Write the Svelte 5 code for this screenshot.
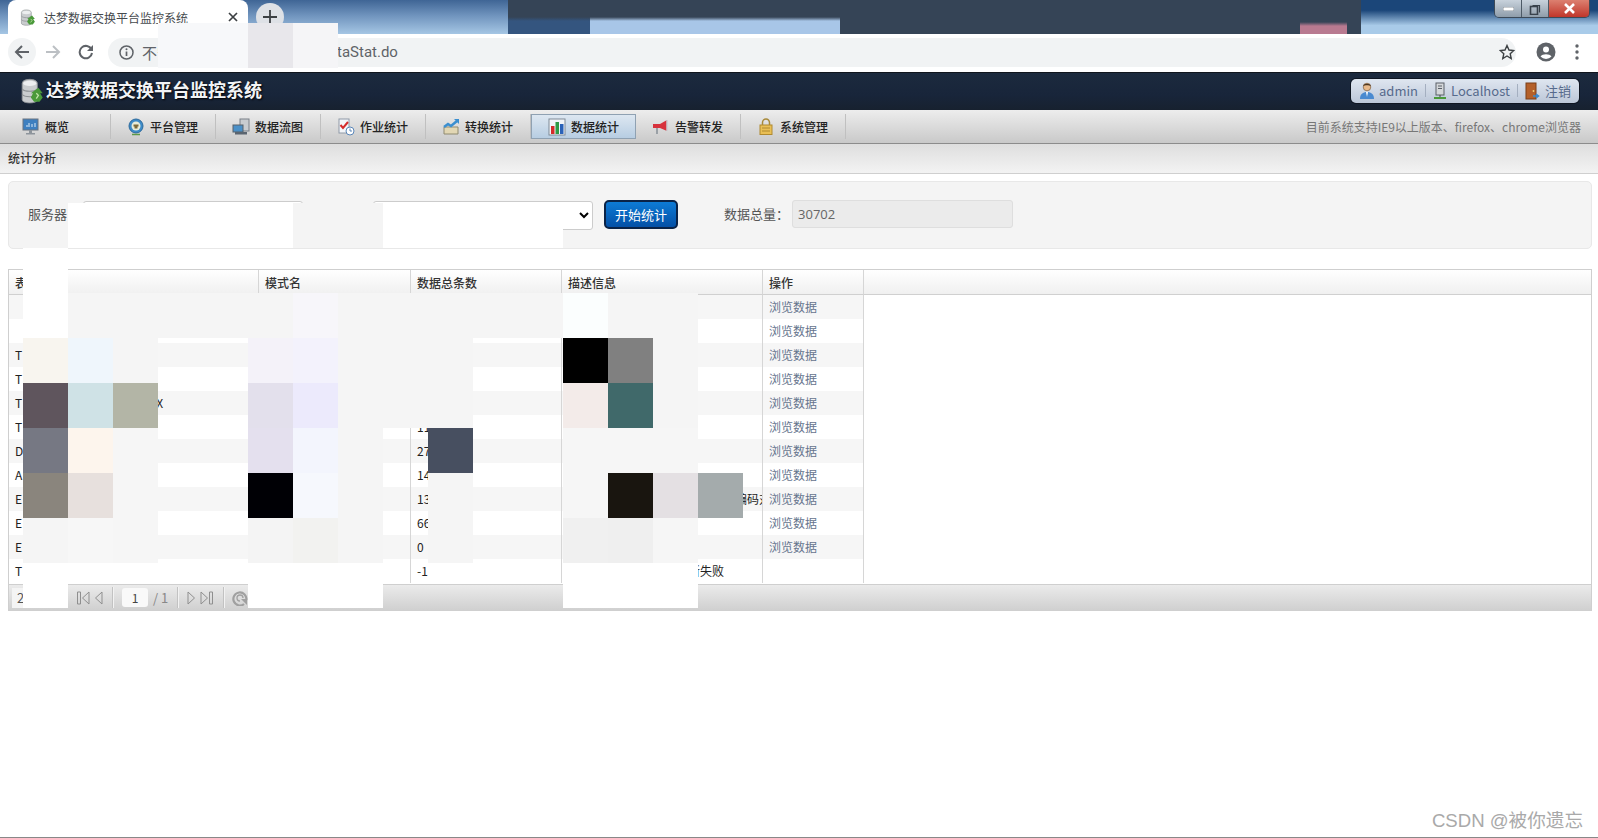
<script lang="ts">
	const navItems = [
		{ id: 'overview', label: '概览' },
		{ id: 'platform', label: '平台管理' },
		{ id: 'flow', label: '数据流图' },
		{ id: 'job', label: '作业统计' },
		{ id: 'transform', label: '转换统计' },
		{ id: 'stats', label: '数据统计', active: true },
		{ id: 'alarm', label: '告警转发' },
		{ id: 'system', label: '系统管理' }
	];

	const rows = [
		{ name: '', count: '', link: true },
		{ name: '', count: '', link: true },
		{ name: 'T', count: '', link: true },
		{ name: 'T', count: '', link: true },
		{ name: 'T', tail: 'X', count: '', link: true },
		{ name: 'T', count: '11', link: true },
		{ name: 'D', count: '27', link: true },
		{ name: 'A', count: '14', link: true },
		{ name: 'E', count: '13', desc: '编码对', link: true },
		{ name: 'E', count: '66', link: true },
		{ name: 'E', count: '0', link: true },
		{ name: 'T', count: '-1', fail: '新失败', link: false }
	];

	// mosaic over the redacted parts: [column, row, colour] on a 45px grid
	const g = '#f5f5f5';
	const w = '#ffffff';
	const tiles: [number, number, string][] = [
		[3, 0, '#f7f8fa'], [4, 0, '#f7f8fa'], [5, 0, '#e8e7eb'], [6, 0, '#f5f5f7'],
		[1, 4, w], [2, 4, w], [3, 4, w], [4, 4, w], [5, 4, w], [6, 4, '#f4f4f4'], [7, 4, '#f4f4f4'],
		[8, 4, w], [9, 4, w], [10, 4, w], [11, 4, w],
		[0, 5, w], [0, 6, w],
		[1, 6, g], [2, 6, g], [3, 6, g], [4, 6, g], [5, 6, g], [6, 6, '#f7f6fa'], [7, 6, g], [8, 6, g], [9, 6, g],
		[10, 6, g], [11, 6, g], [12, 6, '#fbfefe'], [13, 6, g], [14, 6, g],
		[0, 7, '#f8f5ef'], [1, 7, '#eff6fc'], [2, 7, g], [5, 7, '#f4f2f9'], [6, 7, '#f3f2fc'], [7, 7, g], [8, 7, g], [9, 7, g],
		[12, 7, '#000000'], [13, 7, '#808080'], [14, 7, g],
		[0, 8, '#5f555d'], [1, 8, '#cfe2e6'], [2, 8, '#b3b5a6'], [5, 8, '#e3e0ec'], [6, 8, '#eceafc'], [7, 8, g], [8, 8, g], [9, 8, g],
		[12, 8, '#f3ebe9'], [13, 8, '#40696a'], [14, 8, g],
		[0, 9, '#767883'], [1, 9, '#fdf5ed'], [2, 9, '#f6f6f6'], [5, 9, '#e4e0ee'], [6, 9, '#f3f5fd'], [7, 9, g], [9, 9, '#474f60'],
		[12, 9, '#f6f6f6'], [13, 9, '#f6f6f6'], [14, 9, '#f6f6f6'],
		[0, 10, '#8a857d'], [1, 10, '#e7e0dd'], [2, 10, '#f6f6f6'], [5, 10, '#000005'], [6, 10, '#f6f8fd'], [7, 10, g], [9, 10, g],
		[12, 10, '#f6f6f6'], [13, 10, '#19150f'], [14, 10, '#e4e0e3'], [15, 10, '#a4abac'],
		[0, 11, g], [1, 11, '#f7f7f7'], [2, 11, '#f6f6f6'], [5, 11, '#f4f4f4'], [6, 11, '#f2f2f0'], [7, 11, g], [9, 11, g],
		[12, 11, '#f0f0f0'], [13, 11, '#efefef'], [14, 11, '#f6f6f6'],
		[0, 12, w], [5, 12, w], [6, 12, w], [7, 12, w], [12, 12, w], [13, 12, w], [14, 12, w]
	];
</script>

{#snippet dbIcon(size)}
	<svg width={size} height={size} viewBox="0 0 24 24">
		<path d="M2 5c0-5 14-5 14 0v15c0 4-14 4-14 0z" fill="#c9ccce" stroke="#8b8f92" stroke-width=".8" />
		<path d="M2 10c2 3 12 3 14 0M2 15c2 3 12 3 14 0" fill="none" stroke="#8b8f92" />
		<ellipse cx="9" cy="5" rx="6" ry="2.4" fill="#eceeef" />
		<path d="M17 9l4 5h-2.400l2.400 4-3 4h-5l-3-4 2-4h-2z" fill="#4a9a3a" />
		<path d="M15 14l2 2-2 3" fill="none" stroke="#bfe3a8" stroke-width="1.200" />
	</svg>
{/snippet}

{#snippet navIcon(id)}
	<svg width="18" height="18" viewBox="0 0 18 18">
		{#if id === 'overview'}
			<rect x="1" y="1" width="15" height="11" fill="#3d7fc0" stroke="#6b7480" />
			<path d="M4 8h2M7 5v4M10 6v3M13 5v4" stroke="#dcecf8" />
			<rect x="7" y="12" width="3" height="3" fill="#8d949b" />
			<rect x="4" y="15" width="9" height="1.500" fill="#8d949b" />
		{:else if id === 'platform'}
			<circle cx="9" cy="8" r="7" fill="#3c8bc9" stroke="#2c6a9c" />
			<circle cx="9" cy="8" r="4.500" fill="#e8edd8" />
			<path d="M6.500 6.500h5v2h-1v2h-3v-2h-1z" fill="#7a6a3a" />
			<path d="M5 16.500h8" stroke="#5d9a4a" stroke-width="1.500" />
		{:else if id === 'flow'}
			<rect x="8" y="1" width="9" height="12" fill="#c8ccd0" stroke="#7a8088" />
			<rect x="1" y="7" width="10" height="7" fill="#4a90c8" stroke="#56606a" />
			<rect x="3" y="14" width="12" height="2.500" fill="#5b6570" />
		{:else if id === 'job'}
			<rect x="2" y="1" width="10" height="14" fill="#f3f5f8" stroke="#8f9aa8" />
			<path d="M3.500 7l2.500 3 5-6" fill="none" stroke="#d42b2b" stroke-width="2" />
			<circle cx="13" cy="13" r="4" fill="#fff" stroke="#5a86b8" />
			<path d="M13 10.500v2.500h2" fill="none" stroke="#5a86b8" />
		{:else if id === 'transform'}
			<path d="M2 9h14v7H2z" fill="#e2d7b4" stroke="#8f8a70" />
			<path d="M2 9l4-3 3 2 6-5" fill="none" stroke="#3b8fd0" stroke-width="2.500" />
			<path d="M12 1h5v5z" fill="#3b8fd0" />
		{:else if id === 'stats'}
			<rect x="1" y="1" width="16" height="16" fill="#f2f5f8" stroke="#7f8a96" />
			<rect x="3" y="8" width="3.500" height="8" fill="#d42a2a" />
			<rect x="7.500" y="4" width="3.500" height="12" fill="#2f9a45" />
			<rect x="12" y="6" width="3.500" height="10" fill="#2a62b8" />
		{:else if id === 'alarm'}
			<path d="M1 6h7l7-4v11l-7-3H1z" fill="#d7323c" />
			<path d="M15 2v11" stroke="#c9ccd0" stroke-width="1.500" />
			<path d="M4 10v6h2v-6" fill="#9aa0a6" />
		{:else if id === 'system'}
			<path d="M5.500 7V4.500a3.500 3.500 0 0 1 7 0V7" fill="none" stroke="#a88a3a" stroke-width="1.500" />
			<rect x="3" y="7" width="12" height="9.500" fill="#e9bf55" stroke="#b08a30" />
			<path d="M5 10h8M5 13h8" stroke="#b08a30" />
		{/if}
	</svg>
{/snippet}

<div class="page">
	<div class="tabstrip">
		<div class="tab">
			{@render dbIcon(17)}
			<span class="tab-title">达梦数据交换平台监控系统</span>
			<svg class="tab-close" width="10" height="10" viewBox="0 0 10 10">
				<path d="M1 1l8 8M9 1l-8 8" stroke="#3c4043" stroke-width="1.700" />
			</svg>
		</div>
		<div class="new-tab">
			<svg width="14" height="14" viewBox="0 0 14 14"><path d="M7 0v14M0 7h14" stroke="#3c4043" stroke-width="1.800" /></svg>
		</div>
		<div class="win-controls">
			<span class="win-btn">
				<svg width="11" height="4" viewBox="0 0 11 4"><rect width="11" height="4" fill="#fff" stroke="#4a5560" stroke-width=".6" /></svg>
			</span>
			<span class="win-btn">
				<svg width="12" height="12" viewBox="0 0 12 12">
					<path d="M3.500 2.500h7v7" fill="none" stroke="#39424c" stroke-width="1.200" />
					<rect x="1.500" y="3.500" width="7" height="8" fill="none" stroke="#39424c" stroke-width="1.600" />
				</svg>
			</span>
			<span class="win-btn close">
				<svg width="13" height="11" viewBox="0 0 13 11"><path d="M2 1l9 9M11 1l-9 9" stroke="#fff" stroke-width="2.600" /></svg>
			</span>
		</div>
	</div>

	<div class="toolbar">
		<span class="round-btn">
			<svg width="16" height="16" viewBox="0 0 16 16"><path d="M15 8H2M8 2L2 8l6 6" fill="none" stroke="#5f6368" stroke-width="2" /></svg>
		</span>
		<span class="plain-btn">
			<svg width="16" height="16" viewBox="0 0 16 16"><path d="M1 8h13M8 2l6 6-6 6" fill="none" stroke="#bcc0c4" stroke-width="2" /></svg>
		</span>
		<span class="plain-btn">
			<svg width="16" height="16" viewBox="0 0 16 16"><path d="M13.500 5.500A6.200 6.200 0 1 0 14 9" fill="none" stroke="#5f6368" stroke-width="2" /><path d="M15 1v6H9z" fill="#5f6368" /></svg>
		</span>
		<div class="omnibox">
			<svg width="15" height="15" viewBox="0 0 15 15">
				<circle cx="7.500" cy="7.500" r="6.500" fill="none" stroke="#5f6368" stroke-width="1.500" />
				<path d="M7.500 6.500v4.500" stroke="#5f6368" stroke-width="1.700" />
				<circle cx="7.500" cy="4.300" r="1" fill="#5f6368" />
			</svg>
			<span class="url-state">不安</span>
			<span class="url-rest">taStat.do</span>
			<svg class="star" width="16" height="16" viewBox="0 0 16 16">
				<path d="M8 1.500l2 4.500 4.800.5-3.600 3.200 1 4.800L8 12l-4.200 2.500 1-4.800L1.200 6.500 6 6z" fill="none" stroke="#3c4043" stroke-width="1.400" />
			</svg>
		</div>
		<svg class="avatar" width="20" height="20" viewBox="0 0 20 20">
			<circle cx="10" cy="10" r="9.500" fill="#5f6368" />
			<circle cx="10" cy="7.500" r="3" fill="#fff" />
			<path d="M4.500 14.500c2-3 9-3 11 0a7.500 7.500 0 0 1-11 0z" fill="#fff" />
		</svg>
		<svg class="dots" width="4" height="16" viewBox="0 0 4 16">
			<circle cx="2" cy="2" r="1.700" fill="#5f6368" /><circle cx="2" cy="8" r="1.700" fill="#5f6368" /><circle cx="2" cy="14" r="1.700" fill="#5f6368" />
		</svg>
	</div>

	<header class="topbar">
		<span class="brand-icon">{@render dbIcon(26)}</span>
		<span class="brand">达梦数据交换平台监控系统</span>
		<div class="userbox">
			<span class="user-item">
				<svg width="16" height="18" viewBox="0 0 16 18">
					<circle cx="8" cy="5" r="3.800" fill="#e8b98a" stroke="#6a4a2a" stroke-width=".6" />
					<path d="M4 4c1-3 7-3 8 0-2-1-6-1-8 0z" fill="#4a3520" />
					<path d="M1 17c0-5 3-7 7-7s7 2 7 7z" fill="#4a8ad0" />
					<path d="M7 10h2l-1 5z" fill="#fff" />
				</svg>
				admin
			</span>
			<i></i>
			<span class="user-item">
				<svg width="14" height="18" viewBox="0 0 14 18">
					<rect x="3" y="1" width="8" height="12" fill="#d4d7da" stroke="#5a6068" />
					<path d="M5 4h4M5 6.500h4" stroke="#5a6068" />
					<path d="M7 13v2" stroke="#444" />
					<path d="M1 16h12" stroke="#4a9a3a" stroke-width="2" />
				</svg>
				Localhost
			</span>
			<i></i>
			<span class="user-item">
				<svg width="16" height="18" viewBox="0 0 16 18">
					<rect x="1" y="1" width="10" height="16" fill="#b4602a" stroke="#7a3f18" />
					<circle cx="8.500" cy="9" r=".9" fill="#f2d27a" />
					<path d="M8 14h5M11 12l2.500 2-2.500 2" fill="none" stroke="#3a8ad0" stroke-width="1.600" />
				</svg>
				注销
			</span>
		</div>
	</header>

	<nav class="nav">
		{#each navItems as item}
			<a class="nav-item" class:active={item.active} href="#top">
				{@render navIcon(item.id)}
				<span>{item.label}</span>
			</a>
		{/each}
		<span class="nav-note">目前系统支持IE9以上版本、firefox、chrome浏览器</span>
	</nav>

	<div class="crumb">统计分析</div>

	<section class="filter">
		<label class="server-label" for="server">服务器</label>
		<select id="server" class="server-select"></select>
		<select class="schema-select" aria-label="模式"></select>
		<button class="start-btn">开始统计</button>
		<span class="total-label">数据总量：</span>
		<input class="total-input" value="30702" disabled />
	</section>

	<section class="grid">
		<table>
			<thead>
				<tr>
					<th class="c-name">表名</th>
					<th class="c-schema">模式名</th>
					<th class="c-count">数据总条数</th>
					<th class="c-desc">描述信息</th>
					<th class="c-op">操作</th>
					<th class="c-fill"></th>
				</tr>
			</thead>
			<tbody>
				{#each rows as row}
					<tr>
						<td>{row.name}{#if row.tail}<span class="name-tail">{row.tail}</span>{/if}</td>
						<td></td>
						<td>{row.count}</td>
						<td>
							{#if row.desc}<span class="desc-tail">{row.desc}</span>{/if}
							{#if row.fail}<span class="fail-tail">{row.fail}</span>{/if}
						</td>
						<td>{#if row.link}<a class="browse" href="#top">浏览数据</a>{/if}</td>
						<td class="c-fill"></td>
					</tr>
				{/each}
			</tbody>
		</table>
		<div class="pager">
			<span class="page-size">2</span>
			<span class="pager-group first">
				<svg width="27" height="14" viewBox="0 0 27 14">
					<path d="M1.500 1v12h3V1zM13 1L6.500 7l6.500 6zM26 1l-6.500 6 6.500 6z" fill="none" stroke="#8f8f8f" />
				</svg>
			</span>
			<i></i>
			<span class="page-input">1</span>
			<span class="page-total">/ 1</span>
			<i></i>
			<span class="pager-group">
				<svg width="27" height="14" viewBox="0 0 27 14">
					<path d="M1 1l6.500 6L1 13zM14 1l6.500 6L14 13zM22.500 1v12h3V1z" fill="none" stroke="#8f8f8f" />
				</svg>
			</span>
			<i></i>
			<svg class="refresh" width="16" height="16" viewBox="0 0 16 16">
				<path d="M12 14a6.500 6.500 0 1 1 2.300-4" fill="none" stroke="#a0a0a0" stroke-width="2.200" />
				<path d="M8 11a3 3 0 1 1 3-3" fill="none" stroke="#a0a0a0" stroke-width="1.300" />
				<path d="M9 9h6v6z" fill="#a0a0a0" />
			</svg>
		</div>
	</section>

	{#each tiles as [c, r, colour]}
		<div class="tile" style="left:{23 + c * 45}px;top:{23 + r * 45}px;background:{colour}"></div>
	{/each}

	<div class="watermark">CSDN @被你遗忘</div>
</div>

<style>
	:global(body) {
		margin: 0;
		background: #fff;
	}

	.page {
		position: relative;
		height: 837px;
		overflow: hidden;
		border-bottom: 1px solid #888;
		font-family: 'Noto Sans CJK SC', 'Liberation Sans', sans-serif;
		font-size: 12px;
		color: #333;
	}

	.tabstrip {
		position: relative;
		height: 34px;
		display: flex;
		align-items: flex-start;
		background:
			linear-gradient(transparent, #a8c6e8 4px) 590px 17px / 250px 17px no-repeat,
			linear-gradient(transparent, #34557f 4px) 508px 17px / 82px 17px no-repeat,
			linear-gradient(transparent, #b87a90 4px) 1300px 22px / 47px 12px no-repeat,
			linear-gradient(#1b4679 0, #1b4679 30%, #a9cbe9 75%) 1361px 0 / 240px 34px no-repeat,
			linear-gradient(#3f6595 0, #6f93bd 45%, #a5c6e4 100%) 0 0 / 508px 34px no-repeat,
			#354456;
	}

	.tab {
		width: 240px;
		height: 34px;
		margin-left: 8px;
		padding-left: 12px;
		box-sizing: border-box;
		display: flex;
		align-items: center;
		background: #fff;
		border-radius: 8px 8px 0 0;
	}

	.tab-title {
		margin-left: 7px;
		color: #45494d;
	}

	.tab-close {
		margin-left: 40px;
	}

	.new-tab {
		width: 28px;
		height: 28px;
		margin: 3px 0 0 8px;
		display: flex;
		align-items: center;
		justify-content: center;
		border-radius: 50%;
		background: #dee1e6;
	}

	.win-controls {
		position: absolute;
		top: 0;
		right: 8px;
		width: 96px;
		height: 18px;
		display: flex;
		box-sizing: border-box;
		border: 1px solid #3d4a58;
		border-top: 0;
		border-radius: 0 0 5px 5px;
		overflow: hidden;
	}

	.win-btn {
		width: 26px;
		display: flex;
		align-items: center;
		justify-content: center;
		background: linear-gradient(#c8d2dc, #8f9daa);
		border-right: 1px solid #4d5a66;
	}

	.win-btn.close {
		flex: 1;
		border-right: 0;
		background: linear-gradient(#dc8070, #c0362a);
	}

	.toolbar {
		height: 38px;
		padding-left: 8px;
		box-sizing: border-box;
		display: flex;
		align-items: center;
		background: #fff;
	}

	.round-btn {
		width: 28px;
		height: 28px;
		margin-top: -3px;
		display: flex;
		align-items: center;
		justify-content: center;
		border-radius: 50%;
		background: #f1f3f4;
	}

	.plain-btn {
		width: 33px;
		margin-top: -3px;
		display: flex;
		justify-content: center;
	}

	.omnibox {
		width: 1408px;
		height: 29px;
		margin: -2px 0 0 6px;
		padding-left: 11px;
		box-sizing: border-box;
		display: flex;
		align-items: center;
		border-radius: 15px;
		background: #f1f3f4;
		color: #5f6368;
		font-size: 15px;
	}

	.url-state {
		margin-left: 8px;
		width: 195px;
	}

	.url-rest {
		font-family: Roboto, 'Liberation Sans', sans-serif;
	}

	.star {
		margin-left: auto;
		margin-right: 1px;
	}

	.avatar {
		margin: -3px 0 0 20px;
	}

	.dots {
		margin: -3px 0 0 19px;
	}

	.topbar {
		height: 38px;
		display: flex;
		align-items: center;
		padding: 0 19px 2px 20px;
		background: linear-gradient(#1c2a3e, #18253a 60%, #17212f);
		border-top: 1px solid #10151d;
		box-sizing: border-box;
	}

	.brand-icon {
		display: flex;
	}

	.brand {
		margin-top: -3px;
		color: #f2f4f6;
		font-size: 18px;
		font-weight: 700;
		text-shadow: 1px 1px 2px #000;
	}

	.userbox {
		margin-left: auto;
		width: 228px;
		height: 24px;
		box-sizing: border-box;
		padding: 0 8px;
		display: flex;
		align-items: center;
		justify-content: space-between;
		border-radius: 5px;
		background: linear-gradient(#dfe6f0, #bcc7d8);
		box-shadow: 0 0 0 1px #0f1622;
		color: #566a8c;
		font-size: 13px;
	}

	.user-item {
		display: flex;
		align-items: center;
		gap: 4px;
	}

	.userbox i {
		width: 1px;
		height: 13px;
		background: #a4afc0;
	}

	.nav {
		height: 34px;
		box-sizing: border-box;
		padding-left: 6px;
		display: flex;
		align-items: center;
		background: linear-gradient(#ededed, #c9c9c9);
		border-bottom: 1px solid #8c8c8c;
	}

	.nav-item {
		width: 105px;
		height: 25px;
		box-sizing: border-box;
		padding-left: 16px;
		display: flex;
		align-items: center;
		gap: 5px;
		color: #222;
		font-weight: 500;
		text-decoration: none;
		border-right: 1px solid #c0c0c0;
	}

	.nav-item.active {
		background: linear-gradient(#dde7f1, #b7cde2);
		border: 1px solid #74889c;
		outline: 1px solid #8fa1b2;
		outline-offset: -1px;
	}

	.nav-note {
		margin-left: auto;
		margin-right: 17px;
		color: #777;
	}

	.crumb {
		height: 30px;
		box-sizing: border-box;
		padding-left: 8px;
		line-height: 28px;
		font-weight: 500;
		background: linear-gradient(#dedede, #f3f3f3);
		border-bottom: 1px solid #cfcfcf;
	}

	.filter {
		height: 68px;
		margin: 7px 6px 0 8px;
		box-sizing: border-box;
		display: flex;
		align-items: flex-start;
		padding-top: 18px;
		background: #f4f4f4;
		border: 1px solid #e8e8e8;
		border-radius: 5px;
		font-size: 13px;
		color: #555;
	}

	.server-label {
		margin-left: 19px;
		line-height: 28px;
	}

	.server-select,
	.schema-select {
		height: 29px;
		margin-top: 1px;
		box-sizing: border-box;
		background: #fff;
		border: 1px solid #ccc;
		border-radius: 3px;
	}

	.server-select {
		width: 220px;
		margin-left: 16px;
	}

	.schema-select {
		width: 220px;
		margin-left: 70px;
	}

	.start-btn {
		width: 74px;
		height: 29px;
		margin-left: 11px;
		padding: 0;
		font: inherit;
		color: #fff;
		background: linear-gradient(#0d7bd6, #0450a6);
		border: 2px solid #0a2347;
		border-radius: 5px;
	}

	.total-label {
		margin-left: 46px;
		line-height: 28px;
	}

	.total-input {
		width: 221px;
		height: 28px;
		margin-left: 3px;
		padding: 0 5px;
		box-sizing: border-box;
		font: inherit;
		font-family: 'Open Sans', 'Liberation Sans', sans-serif;
		color: #666;
		background: #ebebeb;
		border: 1px solid #dedede;
		border-radius: 3px;
		opacity: 1;
	}

	.grid {
		margin: 20px 6px 0 8px;
		border: 1px solid #cfcfcf;
	}

	table {
		width: 100%;
		table-layout: fixed;
		border-collapse: separate;
		border-spacing: 0;
	}

	th {
		height: 25px;
		padding: 0 6px;
		box-sizing: border-box;
		text-align: left;
		font-weight: 500;
		background: linear-gradient(#fff, #f0f0f0);
		border-right: 1px solid #d6d6d6;
		border-bottom: 1px solid #d0d0d0;
	}

	th.c-fill {
		border-right: 0;
	}

	.c-name {
		width: 250px;
	}

	.c-schema {
		width: 152px;
	}

	.c-count {
		width: 151px;
	}

	.c-desc {
		width: 201px;
	}

	.c-op {
		width: 101px;
	}

	td {
		height: 24px;
		padding: 0 6px;
		box-sizing: border-box;
		white-space: nowrap;
		overflow: hidden;
		color: #222;
		border-right: 1px solid #d6d6d6;
		line-height: 22px;
	}

	td.c-fill {
		border-right: 0;
		background: #fff;
	}

	tbody tr:nth-child(odd) td {
		background: #f6f6f6;
	}

	tbody tr:nth-child(odd) td.c-fill {
		background: #fff;
	}

	.name-tail {
		margin-left: 134px;
	}

	.desc-tail {
		margin-left: 167px;
	}

	.fail-tail {
		margin-left: 120px;
	}

	.browse {
		color: #66758e;
		text-decoration: none;
	}

	.pager {
		height: 26px;
		margin-top: 1px;
		display: flex;
		align-items: center;
		padding-left: 3px;
		background: linear-gradient(#ebebeb, #d0d0d0);
		border-top: 1px solid #cfcfcf;
		box-sizing: border-box;
	}

	.pager i {
		width: 1px;
		height: 21px;
		margin: 0 9px;
		background: #c2c2c2;
		box-shadow: 1px 0 0 #f2f2f2;
	}

	.page-size {
		width: 44px;
		height: 20px;
		padding-left: 5px;
		box-sizing: border-box;
		background: #f4f4f4;
		font-size: 13px;
		line-height: 20px;
		color: #555;
	}

	.pager-group {
		display: flex;
	}

	.pager-group.first {
		margin-left: 20px;
	}

	.page-input {
		width: 26px;
		height: 19px;
		text-align: center;
		line-height: 19px;
		background: #f9f9f9;
		border-radius: 3px;
		color: #444;
	}

	.page-total {
		margin-left: 5px;
		width: 15px;
		white-space: nowrap;
		color: #888;
		font-size: 13px;
	}

	.refresh {
		margin-left: -1px;
	}

	.tile {
		position: absolute;
		width: 45px;
		height: 45px;
	}

	.watermark {
		position: absolute;
		right: 15px;
		bottom: 5px;
		font-size: 18.6px;
		font-family: 'Liberation Sans', 'Noto Sans CJK SC', sans-serif;
		color: #a9a9a9;
	}
</style>
